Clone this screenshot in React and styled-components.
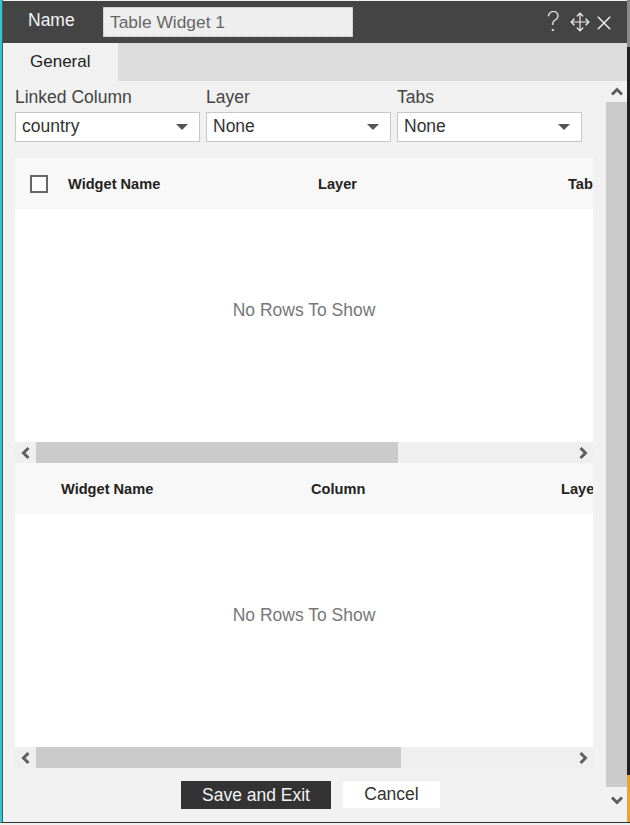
import React from "react";
import styled, { createGlobalStyle } from "styled-components";

const GlobalStyle = createGlobalStyle`
  html, body {
    margin: 0;
    padding: 0;
    background: #f1f1f1;
    font-family: "Liberation Sans", Arial, sans-serif;
  }
`;

function Chevron({ dir }) {
  const paths = {
    up: "M2 9.5 L7 4.5 L12 9.5",
    down: "M2 4.5 L7 9.5 L12 4.5",
    left: "M9.5 2 L4.5 7 L9.5 12",
    right: "M4.5 2 L9.5 7 L4.5 12",
  };
  return (
    <svg width="14" height="14" viewBox="0 0 14 14">
      <path d={paths[dir]} fill="none" stroke="#5f5f5f" strokeWidth="3" />
    </svg>
  );
}

function Select({ value }) {
  return (
    <SelectBox>
      <span>{value}</span>
      <Caret />
    </SelectBox>
  );
}

function Grid({ columns, checkbox, thumb }) {
  return (
    <GridWrap>
      <GridHead $checkbox={checkbox}>
        {checkbox && <CheckBox />}
        {columns.map((c) => (
          <HeadCell key={c}>{c}</HeadCell>
        ))}
      </GridHead>
      <GridBody>No Rows To Show</GridBody>
      <HScroll>
        <ArrowButton>
          <Chevron dir="left" />
        </ArrowButton>
        <HTrack>
          <HThumb $width={thumb} />
        </HTrack>
        <ArrowButton>
          <Chevron dir="right" />
        </ArrowButton>
      </HScroll>
    </GridWrap>
  );
}

export default function App() {
  return (
    <>
      <GlobalStyle />
      <Window>
        <TitleBar>
          <TitleLabel>Name</TitleLabel>
          <NameInput>Table Widget 1</NameInput>
          <TitleIcons>
            <HelpMark>?</HelpMark>
            <svg width="20" height="20" viewBox="0 0 20 20">
              <path
                d="M10 2 L10 18 M2 10 L18 10"
                fill="none"
                stroke="#f3e6ee"
                strokeWidth="1.2"
              />
              <path
                d="M6.8 4.4 L10 1.2 L13.2 4.4 M6.8 15.6 L10 18.8 L13.2 15.6 M4.4 6.8 L1.2 10 L4.4 13.2 M15.6 6.8 L18.8 10 L15.6 13.2"
                fill="none"
                stroke="#f4f4f4"
                strokeWidth="1.3"
              />
            </svg>
            <CloseIcon width="14" height="14" viewBox="0 0 14 14">
              <path d="M0.8 0.8 L13.2 13.2 M13.2 0.8 L0.8 13.2" fill="none" stroke="#f2f2f2" strokeWidth="1.4" />
            </CloseIcon>
          </TitleIcons>
        </TitleBar>
        <TabStrip>
          <ActiveTab>General</ActiveTab>
        </TabStrip>
        <Body>
          <Content>
            <Fields>
              <Field>
                <FieldLabel>Linked Column</FieldLabel>
                <Select value="country" />
              </Field>
              <Field>
                <FieldLabel>Layer</FieldLabel>
                <Select value="None" />
              </Field>
              <Field>
                <FieldLabel>Tabs</FieldLabel>
                <Select value="None" />
              </Field>
            </Fields>
            <Grid columns={["Widget Name", "Layer", "Tab"]} checkbox thumb={362} />
            <Grid columns={["Widget Name", "Column", "Laye"]} thumb={365} />
            <Actions>
              <SaveButton>Save and Exit</SaveButton>
              <CancelButton>Cancel</CancelButton>
            </Actions>
          </Content>
          <VScroll>
            <VArrow $height={21}>
              <Chevron dir="up" />
            </VArrow>
            <VThumb />
            <VArrow $height={26}>
              <Chevron dir="down" />
            </VArrow>
          </VScroll>
        </Body>
        <EdgeMark $color="#8a8a8a" $top="-1px" $height="48px" />
        <EdgeMark $color="#f0a32a" $top="775px" $height="47px" />
      </Window>
    </>
  );
}

const Window = styled.div`
  position: relative;
  box-sizing: border-box;
  width: 630px;
  height: 823px;
  padding: 1px 0 0 1px;
  background: #f1f1f1;
  border-left: 2px solid #38c4c8;
  border-right: 3px solid #222;
  border-bottom: 1px solid #333;
  box-shadow: inset 1px 0 0 #555;
  display: flex;
  flex-direction: column;
`;

const TitleBar = styled.div`
  height: 42px;
  flex-shrink: 0;
  background: #444;
  display: flex;
  align-items: center;
  padding: 0 16px 0 25px;
`;

const TitleLabel = styled.div`
  width: 75px;
  color: #f4f4f4;
  font-size: 17.5px;
  margin-top: -4px;
`;

const NameInput = styled.div`
  box-sizing: border-box;
  width: 250px;
  height: 30px;
  line-height: 28px;
  padding-left: 6px;
  background: #eee;
  border: 1px dotted #bbb;
  color: #666;
  font-size: 17.4px;
`;

const TitleIcons = styled.div`
  margin-left: auto;
  display: flex;
  align-items: center;
  gap: 7px;
`;

const HelpMark = styled.span`
  margin-right: 3px;
  color: #e8e8e8;
  font-family: Inter, "Liberation Sans", sans-serif;
  font-size: 27px;
  font-weight: 200;
  line-height: 24px;
`;

const CloseIcon = styled.svg`
  margin-top: 1px;
`;

const TabStrip = styled.div`
  height: 38px;
  flex-shrink: 0;
  background: #dcdcdc;
  display: flex;
`;

const ActiveTab = styled.div`
  width: 115px;
  padding-left: 27px;
  box-sizing: border-box;
  line-height: 38px;
  background: #f1f1f1;
  color: #222;
  font-size: 17px;
`;

const Body = styled.div`
  flex: 1;
  min-height: 0;
  display: flex;
`;

const Content = styled.div`
  width: 603px;
  box-sizing: border-box;
  padding: 0 13px 0 12px;
`;

const Fields = styled.div`
  display: flex;
  gap: 6px;
  padding-top: 7px;
  height: 77px;
  box-sizing: border-box;
`;

const Field = styled.div`
  width: 185px;
`;

const FieldLabel = styled.div`
  color: #444;
  font-size: 17.5px;
  line-height: 18px;
  margin-bottom: 6px;
`;

const SelectBox = styled.div`
  box-sizing: border-box;
  height: 30px;
  background: #fff;
  border: 1px solid #c8c8c8;
  padding: 0 11px 1px 6px;
  color: #333;
  font-size: 17.5px;
  display: flex;
  align-items: center;
  justify-content: space-between;
`;

const Caret = styled.span`
  width: 0;
  height: 0;
  border-left: 6px solid transparent;
  border-right: 6px solid transparent;
  border-top: 6px solid #555;
`;

const GridWrap = styled.div`
  width: 578px;
`;

const GridHead = styled.div`
  height: 51px;
  box-sizing: border-box;
  background: #f8f8f8;
  display: flex;
  align-items: center;
  overflow: hidden;
  padding-left: ${(p) => (p.$checkbox ? "15px" : "46px")};
`;

const CheckBox = styled.div`
  box-sizing: border-box;
  flex-shrink: 0;
  width: 18px;
  height: 18px;
  margin-right: 20px;
  background: #fff;
  border: 2px solid #666;
`;

const HeadCell = styled.div`
  flex: 0 0 250px;
  color: #222;
  font-size: 14.6px;
  font-weight: 700;
  &:last-child {
    flex-basis: auto;
  }
`;

const GridBody = styled.div`
  box-sizing: border-box;
  height: 233px;
  padding-bottom: 31px;
  background: #fff;
  color: #777;
  font-size: 17.5px;
  display: flex;
  align-items: center;
  justify-content: center;
`;

const HScroll = styled.div`
  height: 21px;
  background: #efefef;
  display: flex;
`;

const ArrowButton = styled.div`
  width: 21px;
  flex-shrink: 0;
  display: flex;
  align-items: center;
  justify-content: center;
`;

const HTrack = styled.div`
  flex: 1;
`;

const HThumb = styled.div`
  height: 100%;
  width: ${(p) => p.$width}px;
  background: #cbcbcb;
`;

const Actions = styled.div`
  display: flex;
  justify-content: center;
  gap: 12px;
  padding-top: 13px;
  margin-left: 13px;
`;

const SaveButton = styled.div`
  width: 150px;
  height: 28px;
  line-height: 28px;
  text-align: center;
  background: #333;
  color: #f4f4f4;
  font-size: 17.5px;
`;

const CancelButton = styled.div`
  width: 97px;
  height: 27px;
  line-height: 26px;
  text-align: center;
  background: #fff;
  color: #333;
  font-size: 17.5px;
`;

const VScroll = styled.div`
  width: 21px;
  padding-bottom: 9px;
  display: flex;
  flex-direction: column;
`;

const VArrow = styled.div`
  height: ${(p) => p.$height}px;
  flex-shrink: 0;
  display: flex;
  align-items: center;
  justify-content: center;
`;

const VThumb = styled.div`
  flex: 1;
  background: #cbcbcb;
`;

const EdgeMark = styled.div`
  position: absolute;
  right: -3px;
  top: ${(p) => p.$top};
  width: 3px;
  height: ${(p) => p.$height};
  background: ${(p) => p.$color};
`;
